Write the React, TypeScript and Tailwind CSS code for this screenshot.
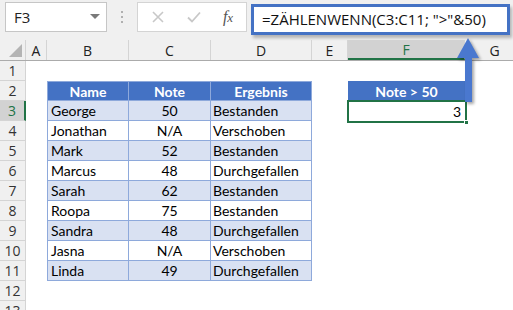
import React from "react";

const COLS = [
  { key: "A", w: 21 },
  { key: "B", w: 82 },
  { key: "C", w: 82 },
  { key: "D", w: 101 },
  { key: "E", w: 36 },
  { key: "F", w: 117 },
  { key: "G", w: 60 },
];

const data: [string, string, string][] = [
  ["George", "50", "Bestanden"],
  ["Jonathan", "N/A", "Verschoben"],
  ["Mark", "52", "Bestanden"],
  ["Marcus", "48", "Durchgefallen"],
  ["Sarah", "62", "Bestanden"],
  ["Roopa", "75", "Bestanden"],
  ["Sandra", "48", "Durchgefallen"],
  ["Jasna", "N/A", "Verschoben"],
  ["Linda", "49", "Durchgefallen"],
];

const cellFont = { fontFamily: "Lato, 'Liberation Sans', sans-serif" };
const uiFont = { fontFamily: "'Open Sans', 'Noto Sans', sans-serif" };

function RowHeader({ n, active }: { n: number; active?: boolean }) {
  return (
    <div
      className={
        "w-[26px] h-full flex items-center justify-center text-[14px] border-r border-b border-[#d4d4d4] shrink-0 " +
        (active
          ? "bg-[#d2d2d2] text-[#217346] border-r-2 border-r-[#217346]"
          : "bg-[#f0f0f0] text-[#333]")
      }
      style={uiFont}
    >
      {n}
    </div>
  );
}

export default function App() {
  const rows = Array.from({ length: 13 }, (_, i) => i + 1);
  return (
    <div className="relative w-[513px] h-[310px] overflow-hidden bg-white">
      {/* Formula bar area */}
      <div className="h-[40px] bg-[#f0f0f0] flex items-start pt-[2px] pl-[5px]">
        <div
          className="w-[102px] h-[30px] bg-white border border-[#c6c6c6] flex items-center justify-between pl-[8px] pr-[6px] text-[15px] text-[#222]"
          style={uiFont}
        >
          <span>F3</span>
          <svg width="10" height="6" viewBox="0 0 10 6">
            <path d="M0 0 L10 0 L5 5 Z" fill="#7a7a7a" />
          </svg>
        </div>
        <div className="w-[30px] h-[30px] flex flex-col items-center justify-center gap-[3px]">
          <div className="w-[2px] h-[2px] bg-[#b0b0b0]" />
          <div className="w-[2px] h-[2px] bg-[#b0b0b0]" />
          <div className="w-[2px] h-[2px] bg-[#b0b0b0]" />
        </div>
        <div className="w-[110px] h-[30px] bg-white border border-[#d4d4d4] flex items-center">
          <div className="w-[40px] flex justify-center">
            <svg width="12" height="12" viewBox="0 0 12 12">
              <path d="M1 1 L11 11 M11 1 L1 11" stroke="#c8c8c8" strokeWidth="1.6" />
            </svg>
          </div>
          <div className="w-[32px] flex justify-center">
            <svg width="14" height="12" viewBox="0 0 14 12">
              <path d="M1 6.5 L5 10.5 L13 1.5" stroke="#c8c8c8" strokeWidth="1.8" fill="none" />
            </svg>
          </div>
          <div className="w-[36px] flex justify-center">
            <span
              className="text-[16px] italic text-[#555] leading-none"
              style={{ fontFamily: "'Liberation Serif', serif" }}
            >
              f<span className="text-[13px]">x</span>
            </span>
          </div>
        </div>
        <div className="ml-[4px] mt-[2px] w-[259px] h-[31px] bg-white border-[3px] border-[#4472c4] flex items-center pl-[8px] shadow-[2px_3px_3px_rgba(0,0,0,0.25)]">
          <span className="text-[15px] text-[#111] whitespace-nowrap" style={uiFont}>
            =ZÄHLENWENN(C3:C11; "&gt;"&amp;50)
          </span>
        </div>
      </div>

      {/* Column headers */}
      <div className="h-[21px] flex bg-[#f0f0f0] border-b border-[#ababab]">
        <div className="w-[26px] h-full relative border-r border-[#d4d4d4] shrink-0">
          <svg className="absolute right-[3px] bottom-[3px]" width="13" height="13" viewBox="0 0 13 13">
            <path d="M13 0 L13 13 L0 13 Z" fill="#b4b4b4" />
          </svg>
        </div>
        {COLS.map((c) => (
          <div
            key={c.key}
            className={
              "h-full flex items-center justify-center text-[14px] shrink-0 border-r border-[#d4d4d4] " +
              (c.key === "F"
                ? "bg-[#d2d2d2] text-[#217346] border-b-2 border-b-[#217346]"
                : "text-[#222]")
            }
            style={{ ...uiFont, width: c.w }}
          >
            {c.key}
          </div>
        ))}
      </div>

      {/* Rows */}
      <div className="flex flex-col" style={cellFont}>
        {rows.map((r) => {
          const isHeader = r === 2;
          const dataRow = r >= 3 && r <= 11 ? data[r - 3] : null;
          const band = r >= 3 && r <= 11 && (r - 3) % 2 === 0;
          const tableBg = isHeader ? "bg-[#4472c4]" : band ? "bg-[#d9e1f2]" : "bg-white";
          const inTable = isHeader || dataRow !== null;
          const tb = "border-r border-b border-[#8ea9db] " + (isHeader ? "border-t " : "");
          return (
            <div key={r} className="h-[20px] flex">
              <RowHeader n={r} active={r === 3} />
              <div className="w-[21px] shrink-0" />
              {inTable ? (
                <>
                  <div
                    className={
                      "w-[82px] shrink-0 flex items-center text-[14px] border-l " +
                      tb +
                      tableBg +
                      (isHeader ? " justify-center font-bold text-white" : " pl-[3px] text-black")
                    }
                  >
                    {isHeader ? "Name" : dataRow![0]}
                  </div>
                  <div
                    className={
                      "w-[82px] shrink-0 flex items-center justify-center text-[14px] " +
                      tb +
                      tableBg +
                      (isHeader ? " font-bold text-white" : " text-black")
                    }
                  >
                    {isHeader ? "Note" : dataRow![1]}
                  </div>
                  <div
                    className={
                      "w-[101px] shrink-0 flex items-center text-[14px] " +
                      tb +
                      tableBg +
                      (isHeader ? " justify-center font-bold text-white" : " pl-[2px] text-black")
                    }
                  >
                    {isHeader ? "Ergebnis" : dataRow![2]}
                  </div>
                </>
              ) : (
                <div className="w-[265px] shrink-0" />
              )}
              <div className="w-[36px] shrink-0" />
              {r === 2 ? (
                <div className="w-[117px] shrink-0 bg-[#4472c4] flex items-center justify-center text-[14px] font-bold text-white">
                  Note &gt; 50
                </div>
              ) : r === 3 ? (
                <div className="w-[117px] shrink-0 relative flex items-center justify-end pr-[4px] text-[14px] text-black">
                  3
                  <div className="absolute -left-[1px] -top-[1px] -right-[2px] -bottom-[2px] border-2 border-[#217346]" />
                  <div className="absolute -right-[4px] -bottom-[4px] w-[5px] h-[5px] bg-[#217346] border border-white" />
                </div>
              ) : (
                <div className="w-[117px] shrink-0" />
              )}
            </div>
          );
        })}
      </div>

      {/* Annotation arrow */}
      <svg
        className="absolute left-[454px] top-[36px]"
        width="30"
        height="72"
        viewBox="0 0 30 72"
        style={{ filter: "drop-shadow(2px 2px 1.5px rgba(0,0,0,0.35))" }}
      >
        <path d="M14 2 L25 22 L18 22 L18 66 L11 66 L11 22 L3 22 Z" fill="#4a78cf" />
      </svg>
    </div>
  );
}
